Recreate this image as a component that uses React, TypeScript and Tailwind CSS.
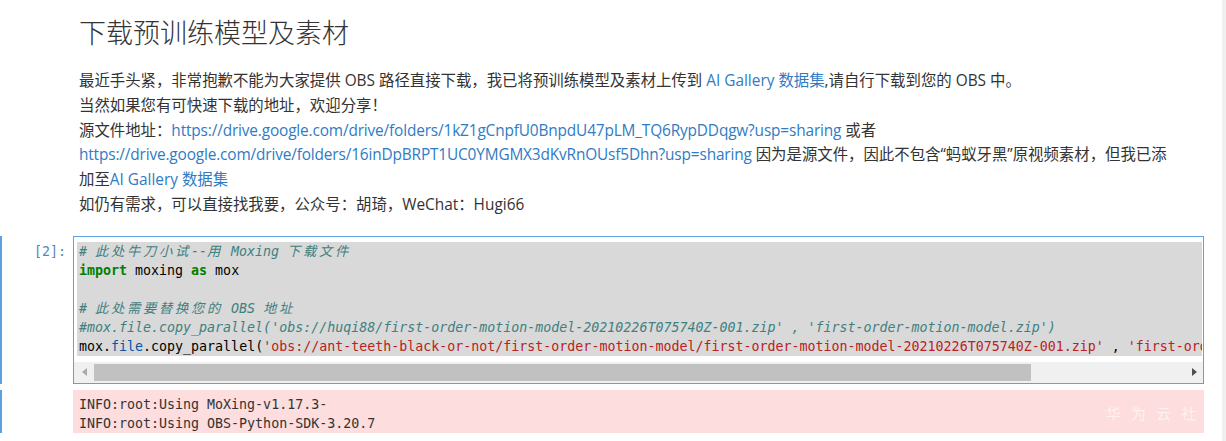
const sans = "font-['Open_Sans','Noto_Sans_CJK_SC',sans-serif]";
const mono = "font-['DejaVu_Sans_Mono','Noto_Sans_CJK_SC',monospace]";

function Link({ children, url }: { children: React.ReactNode; url?: boolean }) {
  return <a className={url ? "tracking-[-0.15px] text-[#2f7bc4]" : "text-[#2f7bc4]"}>{children}</a>;
}

// CJK glyphs take two mono columns in the editor
function Wide({ children }: { children: React.ReactNode }) {
  return <span className="tracking-[2.7px]">{children}</span>;
}

function MarkdownCell() {
  return (
    <div className={`${sans} pl-[79px] pt-[17px] text-[#333]`}>
      <h1 className="text-[27px] font-light leading-[32px]">下载预训练模型及素材</h1>
      <div className="mt-[20px] whitespace-nowrap text-[15.4px] leading-[24.8px]">
        <div>
          最近手头紧，非常抱歉不能为大家提供 OBS 路径直接下载，我已将预训练模型及素材上传到{" "}
          <Link>AI Gallery 数据集</Link>,请自行下载到您的 OBS 中。
        </div>
        <div>当然如果您有可快速下载的地址，欢迎分享！</div>
        <div>
          源文件地址：
          <Link url>
            https://drive.google.com/drive/folders/1kZ1gCnpfU0BnpdU47pLM_TQ6RypDDqgw?usp=sharing
          </Link>{" "}
          或者
        </div>
        <div>
          <Link url>
            https://drive.google.com/drive/folders/16inDpBRPT1UC0YMGMX3dKvRnOUsf5Dhn?usp=sharing
          </Link>{" "}
          因为是源文件，因此不包含“蚂蚁牙黑”原视频素材，但我已添
        </div>
        <div>
          加至<Link>AI Gallery 数据集</Link>
        </div>
        <div>如仍有需求，可以直接找我要，公众号：胡琦，WeChat：Hugi66</div>
      </div>
    </div>
  );
}

function Scrollbar() {
  return (
    <div className="mt-[6px] flex h-[21px] items-center bg-[#f0f0f0]">
      <div className="flex h-full w-[20px] items-center justify-center">
        <svg width="5" height="8" viewBox="0 0 5 8">
          <path d="M5 0L0 4L5 8Z" fill="#a8a8a8" />
        </svg>
      </div>
      <div className="h-[17px] w-[937px] bg-[#c1c1c1]" />
      <div className="flex-1" />
      <div className="flex h-full w-[17px] items-center justify-center">
        <svg width="5" height="8" viewBox="0 0 5 8">
          <path d="M0 0L5 4L0 8Z" fill="#505050" />
        </svg>
      </div>
    </div>
  );
}

function CodeCell() {
  const comment = "italic text-[#408080]";
  const kw = "font-bold text-[#008000]";
  const str = "text-[#ba2121]";
  return (
    <div className={`${mono} mt-[18px] text-[13.3px] leading-[19px]`}>
      <div className="flex">
        <div className="w-[2px] bg-[#5aa2e0]" />
        <div className="w-[71px] pr-[7px] pt-[6px] text-right text-[#5a86b5]">[2]:</div>
        <div className="w-[1131px] border border-[#5aa2e0] pt-[5px]">
          <div className="ml-[3px] mr-[1px] overflow-hidden whitespace-pre bg-[#d9d9d9] pl-[2px] text-black">
            <div className={comment}>
              # <Wide>此处牛刀小试</Wide>--<Wide>用</Wide> Moxing <Wide>下载文件</Wide>
            </div>
            <div>
              <span className={kw}>import</span> moxing <span className={kw}>as</span> mox
            </div>
            <div>&nbsp;</div>
            <div className={comment}>
              # <Wide>此处需要替换您的</Wide> OBS <Wide>地址</Wide>
            </div>
            <div className={comment}>
              #mox.file.copy_parallel('obs://huqi88/first-order-motion-model-20210226T075740Z-001.zip' , 'first-order-motion-model.zip')
            </div>
            <div>
              mox.<span className="text-[#0055aa]">file</span>.copy_parallel(
              <span className={str}>
                'obs://ant-teeth-black-or-not/first-order-motion-model/first-order-motion-model-20210226T075740Z-001.zip'
              </span>{" "}
              , <span className={str}>'first-order-motion-model.zip'</span>)
            </div>
          </div>
          <Scrollbar />
        </div>
      </div>

      <div className="mt-[6px] flex">
        <div className="w-[2px] bg-[#5aa2e0]" />
        <div className="w-[71px]" />
        <div className="relative h-[43px] w-[1131px] overflow-hidden bg-[#fddddd] pl-[6px] pt-[5px] text-[#333]">
          <div>INFO:root:Using MoXing-v1.17.3-</div>
          <div>INFO:root:Using OBS-Python-SDK-3.20.7</div>
          {/* faint site watermark */}
          <span
            className={`${sans} absolute left-[1033px] top-[14px] whitespace-nowrap text-[15px] leading-[18px] tracking-[10px] text-white/60`}
          >
            华为云社区
          </span>
        </div>
      </div>
    </div>
  );
}

export default function App() {
  return (
    <div className="flex h-[441px] w-[1226px] overflow-hidden bg-white">
      <div className="flex min-w-0 flex-1 flex-col">
        <MarkdownCell />
        <CodeCell />
      </div>
      <div className="w-[4px] shrink-0 bg-[#f0f0f0]" />
    </div>
  );
}
